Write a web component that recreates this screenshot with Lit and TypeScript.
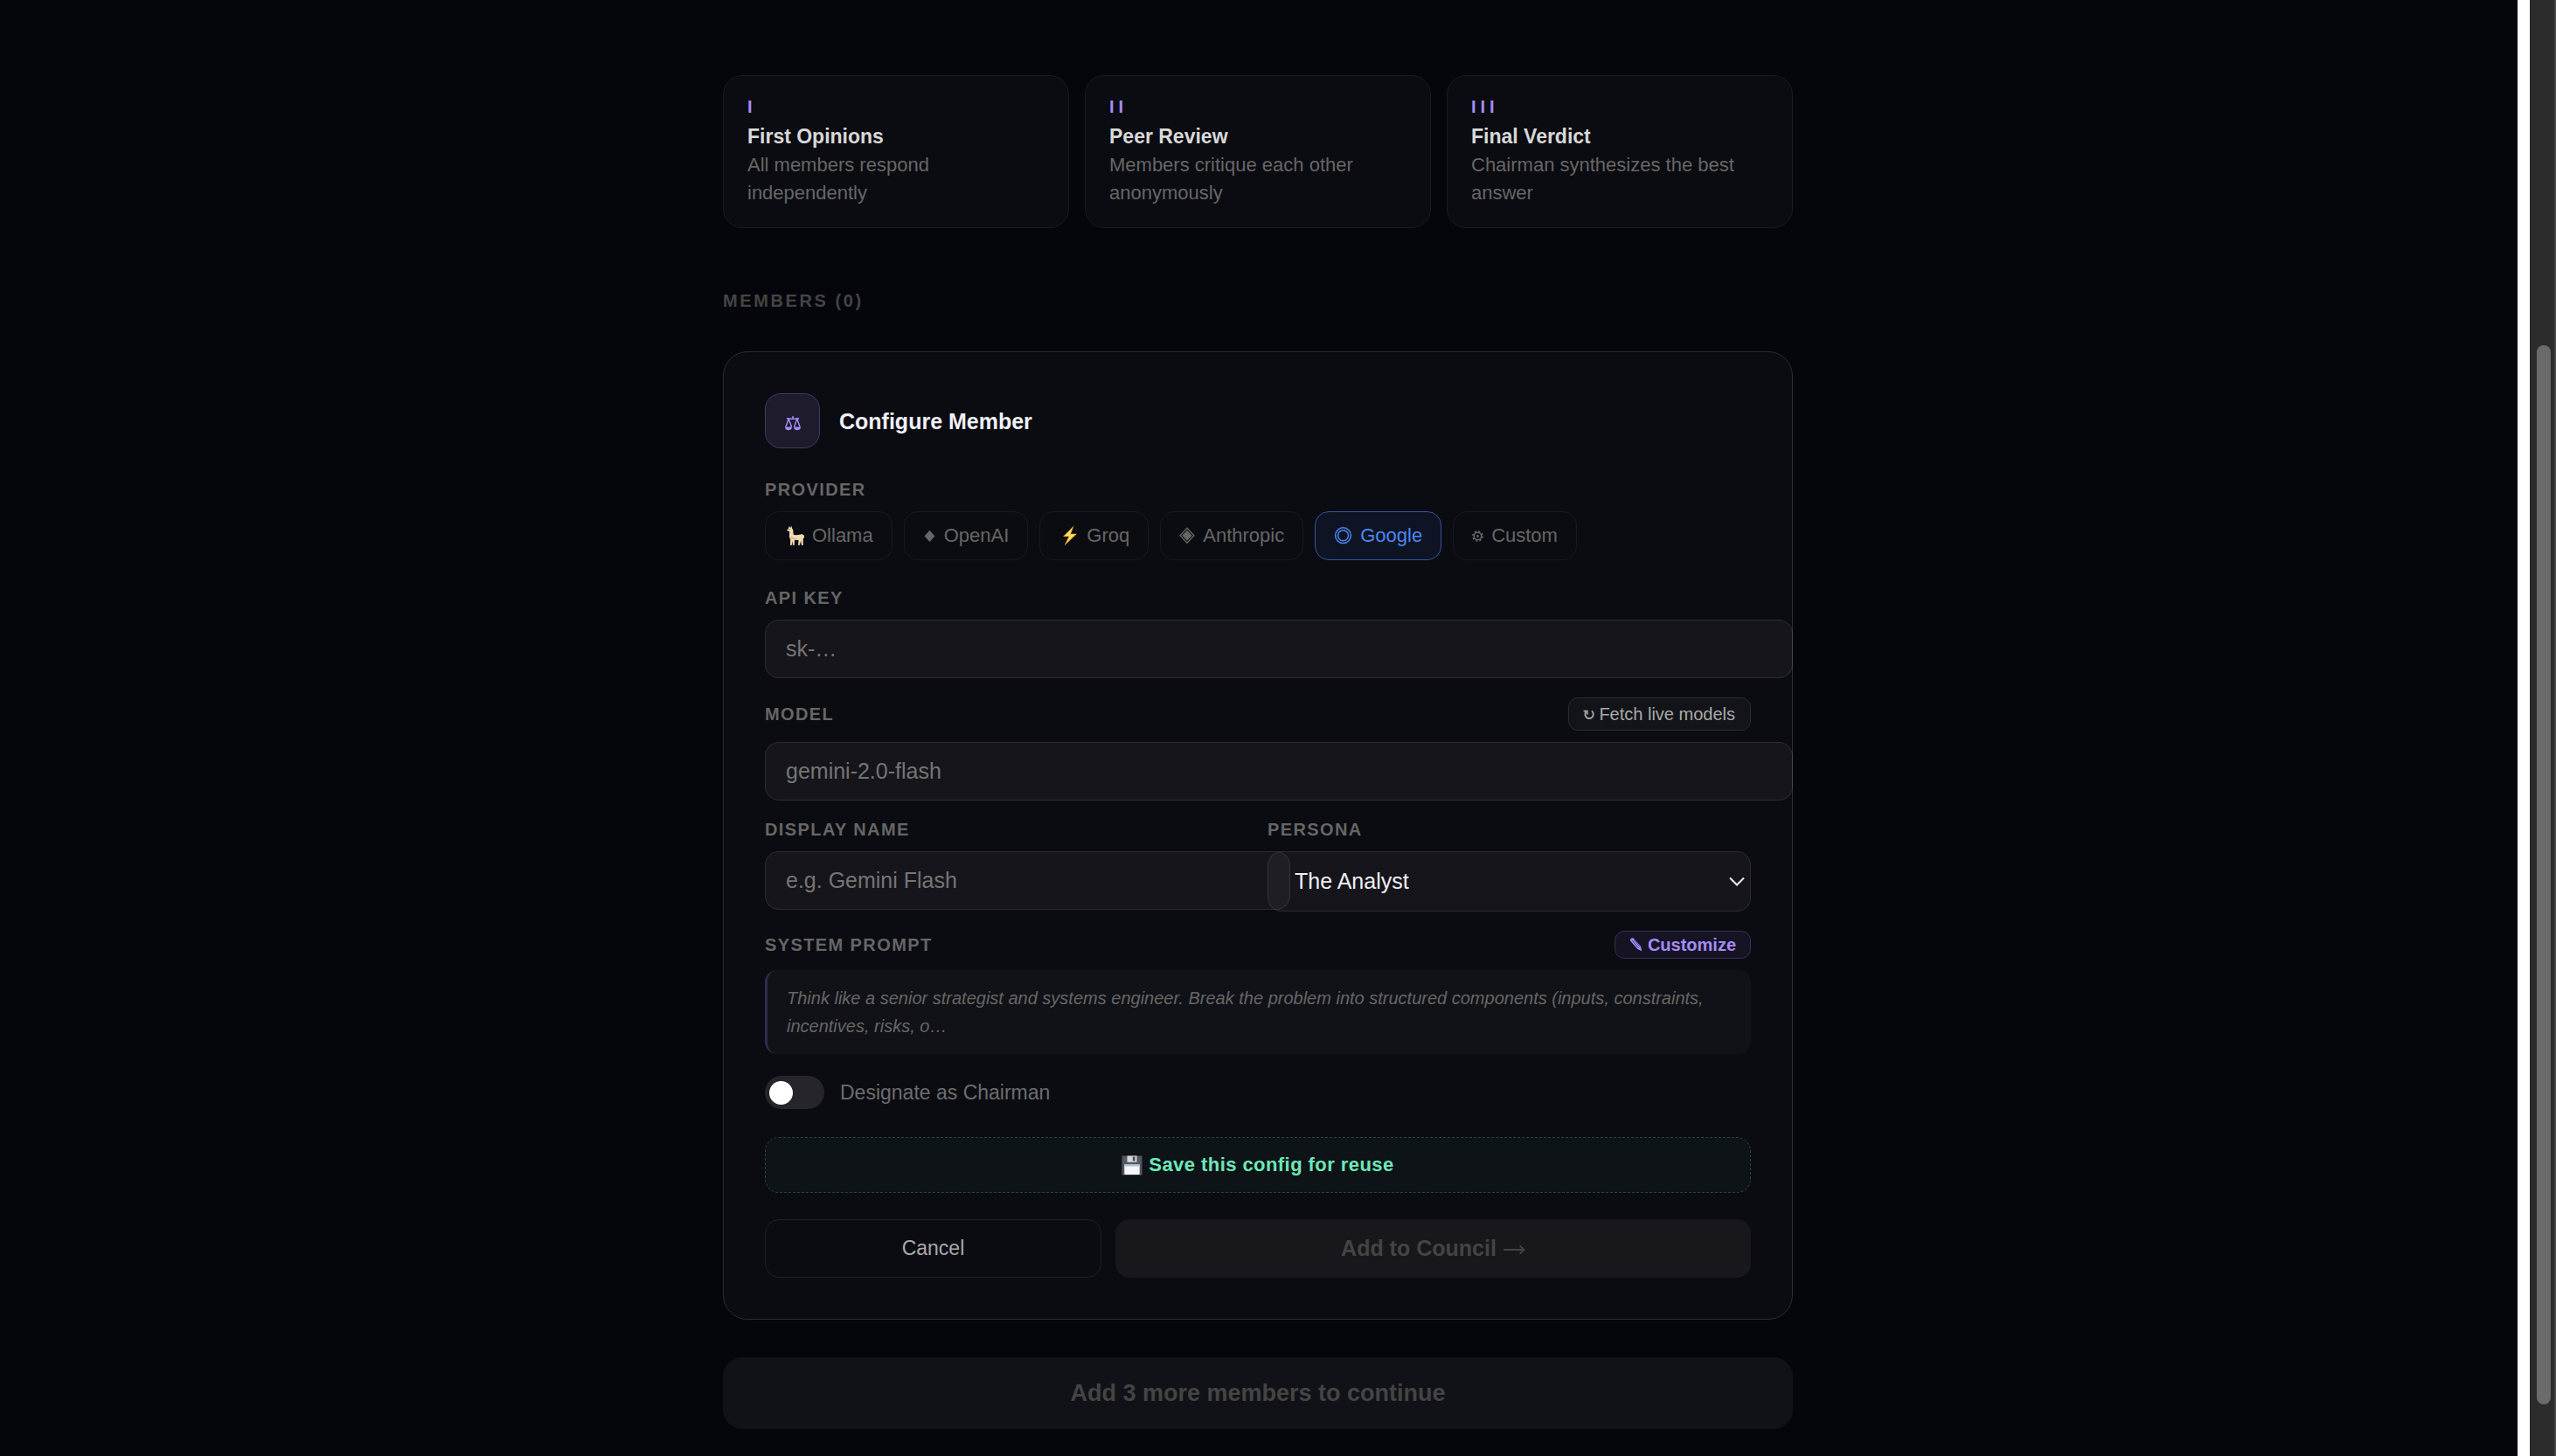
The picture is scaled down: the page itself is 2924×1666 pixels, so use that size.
import { LitElement, html, css } from "lit";
import { customElement, property, state } from "lit/decorators.js";
import { classMap } from "lit/directives/class-map.js";

const icons = {
  ollama: html`<svg width="23" height="24" viewBox="-3 0 23 24" aria-hidden="true">
    <path fill="#efdcb4" d="M3 .8 4 3l1.600-2 .5 2.700c.9.700 1.200 1.700 1.200 2.800l.4 4.300c2.600 1 5.700.2 8.500-.4 1.600-.3 3 .3 3.600 1.500l.6 2.400-1.200.3-.5 1.500.1 6.400h-1.900l-.7-5-1.200 5h-1.900l.4-5.700c-1.500.4-3 .4-4.500 0l-.3 5.700H6.900L6.500 18l-.7 4.500H4l.2-6.600c-1-1.300-1.300-2.800-1.200-4.500L3.200 7 .6 6.400C.2 5.600.7 4.700 1.700 4.300Z"/>
    <path fill="#c9ae7c" d="M4 21.500h1.900v1.500H3.900ZM6.900 21.500h1.900v1.500H6.800ZM13.200 21.500h1.800v1.500H13ZM16.800 21.500h2v1.500h-2ZM5 12.500c1.500 2.400 4.700 3 8 2.400-2.600 1.500-6.800 1.400-8-.400Z"/>
    <circle cx="3.100" cy="4.800" r=".6" fill="#4a3b28"/>
  </svg>`,
  openai: html`<svg width="15" height="14" viewBox="0 0 15 14" aria-hidden="true">
    <path fill="currentColor" d="m7.500.8 6 6.700-6 6.500-6-6.500Z"/>
  </svg>`,
  groq: html`<svg width="23" height="24" viewBox="-2 0 23 24" aria-hidden="true">
    <path fill="#f9b820" d="M15.500.5 3 13h6.500L4.500 23.500 19 9.700h-7Z"/>
    <path fill="#ffe07a" d="M14 3 5.500 12h5.700L8 19l8.300-8.200h-6Z"/>
  </svg>`,
  anthropic: html`<svg width="18" height="20" viewBox="0 0 18 20" aria-hidden="true">
    <path fill="none" stroke="currentColor" stroke-width="1.300" d="m9 1.200 8 8.500-8 8.500-8-8.500Z"/>
    <path fill="currentColor" d="m9 3.700 5.700 6-5.700 6-5.700-6Z"/>
  </svg>`,
  google: html`<svg width="21" height="20" viewBox="0 0 21 20" aria-hidden="true">
    <g fill="none" stroke="currentColor" stroke-width="1.500">
      <circle cx="10.500" cy="9.700" r="8.900"/><circle cx="10.500" cy="9.700" r="6"/>
    </g>
  </svg>`,
  custom: html`<svg width="13" height="14" viewBox="0 0 13 14" aria-hidden="true">
    <g fill="none" stroke="currentColor">
      <circle cx="6.500" cy="7.500" r="4.200" stroke-width="1.600"/>
      <circle cx="6.500" cy="7.500" r="5.600" stroke-width="1.500" stroke-dasharray="2.200 2.198"/>
    </g>
    <circle cx="6.500" cy="7.500" r="1.400" fill="currentColor"/>
  </svg>`,
  scales: html`<svg width="20" height="18" viewBox="0 0 20 19" aria-hidden="true">
    <g fill="none" stroke="currentColor" stroke-width="1.500" stroke-linejoin="round">
      <path d="M10 1v3M2.500 4.200c2.500-.9 4 .5 7.500.3 3.500.2 5-1.200 7.500-.3M5 4.500 1.300 14.500M5 4.500l3.500 10M15 4.500l-3.500 10M15 4.500l3.700 10"/>
    </g>
    <path fill="currentColor" d="M.6 14.200h8.200c0 2.700-1.500 4-4.100 4s-4.100-1.300-4.100-4ZM11.200 14.200h8.200c0 2.700-1.500 4-4.100 4s-4.100-1.300-4.100-4Z"/>
  </svg>`,
  refresh: html`<svg width="13" height="16" viewBox="0 0 13 16" aria-hidden="true">
    <path fill="none" stroke="currentColor" stroke-width="1.800" d="M9.800 4.600a4.700 4.700 0 1 1-6.400.8"/>
    <path fill="none" stroke="currentColor" stroke-width="1.600" d="M.6 4.600h4.200v4.200"/>
  </svg>`,
  pencil: html`<svg width="15" height="18" viewBox="0 0 15 18" aria-hidden="true">
    <path fill="currentColor" d="M1 3.400C1.300 1.800 3 .8 4.700 1.500L13 10.800l1.200 5.400-5-2.300L1 4.600Z"/>
    <path fill="none" stroke="#15122a" stroke-width=".6" d="m3 4.200 7.300 8.600M4.900 2.900l7.300 8.600"/>
  </svg>`,
  floppy: html`<svg width="24" height="24" viewBox="0 0 24 24" aria-hidden="true">
    <path fill="#55585e" d="M.5 1.500h22l1 1v21H.5Z"/>
    <path fill="#d5d7da" d="M6.500 1.500h11v7.300h-11Z"/>
    <path fill="#4a4d52" d="M12.800 2.500h2.700v5h-2.700Z"/>
    <path fill="#f4f6f8" d="M3.300 11.500h17.400v11.500H3.300Z"/>
    <path fill="#a9c2dd" d="M3.300 11.500h17.400v2H3.300Z"/>
  </svg>`,
  chevron: html`<svg class="chevron" width="18" height="12" viewBox="0 0 18 12" aria-hidden="true">
    <path fill="none" stroke="currentColor" stroke-width="2" d="m1 1.500 8 8 8-8"/>
  </svg>`,
  arrow: html`<svg width="25" height="12" viewBox="0 0 25 12" aria-hidden="true">
    <path fill="none" stroke="currentColor" stroke-width="1.800" d="M0 6h23.500M18.500 1.300l5 4.700-5 4.700"/>
  </svg>`,
};

const base = css`
  * { box-sizing: border-box; }
  button, input, select {
    margin: 0;
    font-family: inherit;
    color: inherit;
  }
  svg { display: block; flex: none; }
`;

@customElement("stage-card")
class StageCard extends LitElement {
  @property() numeral = "";
  @property() heading = "";
  @property() text = "";

  static styles = [base, css`
    :host {
      display: block;
      padding: 23px 27px;
      border: 1px solid #1a1b20;
      border-radius: 22px;
      background: #0b0c11;
    }
    .numeral {
      margin-bottom: 9px;
      font-size: 20px;
      line-height: 24px;
      font-weight: 700;
      letter-spacing: 5px;
      color: #a78bfa;
    }
    .heading {
      margin: 0 0 4px;
      font-size: 23px;
      line-height: 26px;
      font-weight: 700;
      color: #d8d8d8;
    }
    .text {
      margin: 0;
      font-size: 22px;
      line-height: 32px;
      color: #666;
    }
  `];

  render() {
    return html`
      <div class="numeral">${this.numeral}</div>
      <h3 class="heading">${this.heading}</h3>
      <p class="text">${this.text}</p>
    `;
  }
}

const providers = [
  { id: "ollama", name: "Ollama", icon: icons.ollama },
  { id: "openai", name: "OpenAI", icon: icons.openai },
  { id: "groq", name: "Groq", icon: icons.groq },
  { id: "anthropic", name: "Anthropic", icon: icons.anthropic },
  { id: "google", name: "Google", icon: icons.google },
  { id: "custom", name: "Custom", icon: icons.custom },
];

@customElement("member-form")
class MemberForm extends LitElement {
  @state() provider = "google";

  static styles = [base, css`
    :host {
      display: block;
      padding: 47px;
      border: 1px solid #2b2c3a;
      border-radius: 28px;
      background: #0b0c11;
    }
    .head {
      display: flex;
      align-items: center;
      gap: 22px;
      margin-bottom: 36px;
    }
    .badge {
      display: grid;
      place-items: center;
      width: 63px;
      height: 63px;
      padding-top: 4px;
      border: 1px solid #423a62;
      border-radius: 18px;
      background: #1e1b2d;
      color: #a78bfa;
    }
    .title {
      margin: 0;
      font-size: 25px;
      line-height: 30px;
      font-weight: 700;
      color: #f0f0f8;
    }
    .form {
      display: flex;
      flex-direction: column;
      gap: 22px;
    }
    .field {
      display: flex;
      flex-direction: column;
      gap: 13px;
      min-width: 0;
    }
    .providers-field { margin-bottom: 10px; }
    .label {
      font-size: 20px;
      line-height: 23px;
      font-weight: 700;
      letter-spacing: 0.07em;
      color: #666;
    }
    .label-row {
      display: flex;
      align-items: center;
      justify-content: space-between;
    }
    .providers {
      display: flex;
      flex-wrap: wrap;
      gap: 13px;
    }
    .provider {
      display: flex;
      align-items: center;
      gap: 9px;
      height: 56px;
      padding: 0 21px;
      border: 1px solid #191a1f;
      border-radius: 16px;
      background: none;
      font-size: 22px;
      color: #666;
    }
    .provider.active {
      border-color: #31569c;
      background: #0e1424;
      color: #4b87f0;
    }
    .control {
      box-sizing: content-box;
      width: 100%;
      height: 29px;
      padding: 18px 23px;
      border: 1px solid rgba(255, 255, 255, 0.09);
      border-radius: 16px;
      background: rgba(255, 235, 255, 0.045);
      font-size: 25px;
      line-height: 29px;
      outline: none;
    }
    .control::placeholder { color: #757575; opacity: 1; }
    .columns {
      display: grid;
      grid-template-columns: 1fr 1fr;
      gap: 22px;
    }
    .select-wrap {
      position: relative;
      color: #f0f0f5;
    }
    .select {
      display: block;
      box-sizing: border-box;
      height: 69px;
      padding: 0 30px;
      appearance: none;
    }
    .select option { background: #16151a; }
    .chevron {
      position: absolute;
      right: 7px;
      top: 29px;
      pointer-events: none;
    }
    .small {
      display: flex;
      align-items: center;
      border: 1px solid;
      border-radius: 11px;
      font-size: 20px;
    }
    .fetch {
      gap: 5px;
      height: 38px;
      padding: 0 17px 0 16px;
      border-color: #2a2b30;
      background: #131419;
      color: #aaa;
    }
    .customize {
      gap: 6px;
      height: 32px;
      padding: 0 16px;
      border-color: #36304f;
      background: #151324;
      font-weight: 700;
      color: #a78bfa;
    }
    .prompt {
      margin: 0;
      padding: 16px 22px;
      border-left: 3px solid #302b4c;
      border-radius: 14px;
      background: #111217;
      font-size: 20px;
      line-height: 32px;
      font-style: italic;
      color: #666;
    }
    .chairman {
      display: flex;
      align-items: center;
      gap: 18px;
      margin: 3px 0 10px;
      font-size: 23px;
      line-height: 38px;
      color: #6c6c6e;
    }
    .toggle {
      display: flex;
      align-items: center;
      width: 68px;
      height: 38px;
      padding: 0 5px;
      border-radius: 19px;
      background: #26252b;
      appearance: none;
    }
    .toggle::before {
      content: "";
      width: 27px;
      height: 27px;
      border-radius: 50%;
      background: #fff;
    }
    .toggle:checked { background: #a78bfa; justify-content: flex-end; }
    .save {
      display: flex;
      align-items: center;
      justify-content: center;
      gap: 7px;
      height: 64px;
      margin-bottom: 8px;
      border: 1px dashed #24443e;
      border-radius: 16px;
      background: #0d1317;
      font-size: 22px;
      font-weight: 700;
      letter-spacing: 0.02em;
      color: #6ee7b7;
    }
    .actions {
      display: grid;
      grid-template-columns: 9fr 17fr;
      gap: 16px;
    }
    .action {
      display: flex;
      align-items: center;
      justify-content: center;
      gap: 8px;
      height: 67px;
      border: 1px solid #1f2025;
      border-radius: 16px;
      background: none;
      font-size: 23px;
      color: #aaa;
    }
    .action.primary {
      border: 0;
      background: #18171c;
      font-size: 25px;
      font-weight: 700;
      color: #444;
    }
    .action svg { margin-top: 3px; }
  `];

  render() {
    return html`
      <div class="head">
        <div class="badge">${icons.scales}</div>
        <h2 class="title">Configure Member</h2>
      </div>
      <form class="form" @submit=${(e: Event) => e.preventDefault()}>
        <div class="field providers-field" role="group" aria-labelledby="provider-label">
          <span class="label" id="provider-label">PROVIDER</span>
          <div class="providers">
            ${providers.map((p) => html`
              <button
                type="button"
                class=${classMap({ provider: true, active: p.id === this.provider })}
                aria-pressed=${p.id === this.provider}
                @click=${() => (this.provider = p.id)}
              >${p.icon}<span>${p.name}</span></button>
            `)}
          </div>
        </div>

        <div class="field">
          <label class="label" for="api-key">API KEY</label>
          <input class="control" id="api-key" type="password" placeholder="sk-…" autocomplete="off" />
        </div>

        <div class="field">
          <div class="label-row">
            <label class="label" for="model">MODEL</label>
            <button type="button" class="small fetch">${icons.refresh}<span>Fetch live models</span></button>
          </div>
          <input class="control" id="model" type="text" placeholder="gemini-2.0-flash" />
        </div>

        <div class="columns">
          <div class="field">
            <label class="label" for="display-name">DISPLAY NAME</label>
            <input class="control" id="display-name" type="text" placeholder="e.g. Gemini Flash" />
          </div>
          <div class="field">
            <label class="label" for="persona">PERSONA</label>
            <div class="select-wrap">
              <select class="control select" id="persona">
                <option>The Analyst</option>
              </select>
              ${icons.chevron}
            </div>
          </div>
        </div>

        <div class="field">
          <div class="label-row">
            <span class="label">SYSTEM PROMPT</span>
            <button type="button" class="small customize">${icons.pencil}<span>Customize</span></button>
          </div>
          <p class="prompt">Think like a senior strategist and systems engineer. Break the problem into structured components (inputs, constraints, incentives, risks, o…</p>
        </div>

        <label class="chairman">
          <input class="toggle" type="checkbox" role="switch" />
          <span>Designate as Chairman</span>
        </label>

        <button type="button" class="save">${icons.floppy}<span>Save this config for reuse</span></button>

        <div class="actions">
          <button type="button" class="action">Cancel</button>
          <button type="submit" class="action primary" disabled><span>Add to Council</span>${icons.arrow}</button>
        </div>
      </form>
    `;
  }
}

@customElement("app-root")
class AppRoot extends LitElement {
  static styles = [base, css`
    :host {
      display: flex;
      min-height: 100vh;
      background: #fff;
      font-family: "Liberation Sans", Arial, Helvetica, sans-serif;
    }
    .page {
      flex: 1;
      min-width: 0;
      padding: 86px 26px 28px 24px;
      background: #05060b;
    }
    .content {
      max-width: 1224px;
      margin: 0 auto;
    }
    .stages {
      display: grid;
      grid-template-columns: repeat(3, 1fr);
      gap: 18px;
    }
    .members {
      margin: 71px 0 46px;
      font-size: 20px;
      line-height: 24px;
      font-weight: 700;
      letter-spacing: 0.13em;
      color: #444;
    }
    .continue {
      display: block;
      width: 100%;
      height: 82px;
      margin-top: 43px;
      border: 0;
      border-radius: 22px;
      background: #111217;
      font-size: 27px;
      font-weight: 700;
      color: #444;
    }
    .scrollbar {
      display: flex;
      width: 30px;
      margin-left: 14px;
      padding: 395px 4px 59px 8px;
      border-right: 2px solid #474747;
      background: #2c2c2c;
    }
    .thumb {
      flex: 1;
      border-radius: 8px;
      background: #6b6b6b;
    }
  `];

  render() {
    return html`
      <main class="page">
        <div class="content">
          <section class="stages">
            <stage-card numeral="I" heading="First Opinions" text="All members respond independently"></stage-card>
            <stage-card numeral="II" heading="Peer Review" text="Members critique each other anonymously"></stage-card>
            <stage-card numeral="III" heading="Final Verdict" text="Chairman synthesizes the best answer"></stage-card>
          </section>
          <h2 class="members">MEMBERS (0)</h2>
          <member-form></member-form>
          <button type="button" class="continue" disabled>Add 3 more members to continue</button>
        </div>
      </main>
      <div class="scrollbar" aria-hidden="true"><div class="thumb"></div></div>
    `;
  }
}
